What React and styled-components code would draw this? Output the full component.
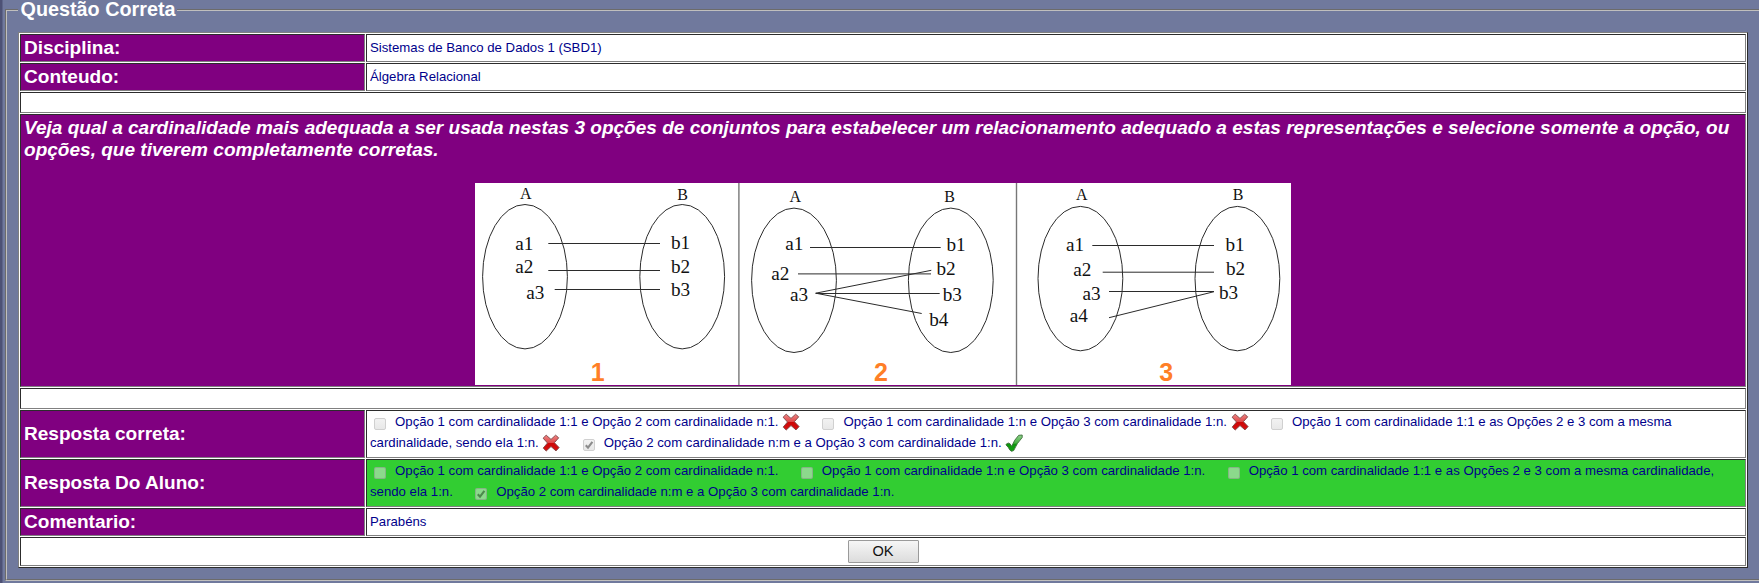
import React from "react";
import styled, { createGlobalStyle } from "styled-components";

const GlobalStyle = createGlobalStyle`
  html, body { margin: 0; padding: 0; overflow: hidden; }
  body {
    background: #70799d;
    font-family: "Liberation Sans", Arial, sans-serif;
  }
`;

const Page = styled.div`
  box-sizing: border-box;
  display: flow-root;
  height: 583px;
  width: 1759px;
  padding-left: 2px;
  border-left: 2px solid #4d5175;
  box-shadow: inset 1px 0 0 #5e658a;
  overflow: hidden;
`;

const Fieldset = styled.fieldset`
  box-sizing: border-box;
  width: 1757px;
  height: 582px;
  margin: -1px 0 0 1px;
  padding: 11px 11px 0;
  border: 2px groove #c0bfbe;
`;

const Legend = styled.legend`
  margin-left: 0;
  padding: 0 1.5px 2px 2.5px;
  color: #fff;
  font-size: 19.8px;
  font-weight: bold;
  line-height: 20px;
`;

const Table = styled.div`
  box-sizing: border-box;
  width: 1730px;
  display: grid;
  grid-template-columns: 345px 1fr;
  grid-template-rows: 28px 28px 21px 273px 21px 48px 48px 28px 29px;
  gap: 1px;
  padding: 1px;
  background: #fff;
  border: 1px solid;
  border-color: #808080 #2c2c2c #2c2c2c #808080;
`;

const Cell = styled.div`
  box-sizing: border-box;
  min-width: 0;
  border: 1px solid;
  border-color: #2c2c2c #808080 #808080 #2c2c2c;
  padding: 0 3px;
  background: #fff;
  color: #00008b;
  font-size: 13.2px;
`;

const LabelCell = styled(Cell)`
  display: flex;
  align-items: center;
  background: #800080;
  color: #fff;
  font-size: 19.06px;
  font-weight: bold;
`;

const ValueCell = styled(Cell)`
  display: flex;
  align-items: center;
  padding-bottom: 2px;
`;

const WideCell = styled(Cell)`
  grid-column: 1 / -1;
`;

const ActionCell = styled(WideCell)`
  display: flex;
  justify-content: center;
  align-items: flex-start;
  padding-top: 2px;
`;

const QuestionCell = styled(WideCell)`
  display: flex;
  flex-direction: column;
  justify-content: space-between;
  align-items: center;
  padding: 2px 3px 1px;
  background: #800080;
`;

const Question = styled.p`
  margin: 0;
  align-self: stretch;
  color: #fff;
  font-size: 19.05px;
  font-style: italic;
  font-weight: bold;
  line-height: 22px;
`;

const AnswersCell = styled(Cell)`
  line-height: 21px;
  background: ${(p) => (p.$right ? "#32cd32" : "#fff")};
`;

const Box = styled.span`
  box-sizing: border-box;
  display: inline-block;
  position: relative;
  width: 12px;
  height: 12px;
  margin: 0 5.4px 0 4px;
  vertical-align: -4px;
  border: 1px solid ${(p) => (p.$tint ? "rgba(130,150,130,.55)" : "#d0d0d0")};
  border-radius: 2px;
  background: ${(p) =>
    p.$tint ? "rgba(230,230,230,.5)" : "linear-gradient(#f2f2f2, #e8e8e8)"};
`;

const BoxTick = styled.svg`
  position: absolute;
  left: 0;
  top: 0;
  width: 10px;
  height: 10px;
`;

const MarkSvg = styled.svg`
  display: inline-block;
  width: 18px;
  height: 18px;
  vertical-align: -5px;
`;

const OkButton = styled.button`
  box-sizing: border-box;
  width: 71px;
  height: 23px;
  padding: 0;
  border: 1px solid #9a9a9a;
  border-radius: 1px;
  background: linear-gradient(#f6f6f6, #dcdcdc);
  color: #111;
  font: 14.6px/21px "Liberation Sans", Arial, sans-serif;
`;

const Diagram = styled.svg`
  display: block;
  flex: none;
  background: #fff;
`;

function CheckBox({ checked, tint }) {
  return (
    <Box $tint={tint}>
      {checked && (
        <BoxTick viewBox="0 0 10 10">
          <path
            d="M1.8 5.2 L4 7.6 L8.4 1.8"
            fill="none"
            stroke={tint ? "#4c8a4c" : "#8c8c8c"}
            strokeWidth="2.1"
          />
        </BoxTick>
      )}
    </Box>
  );
}

function Mark({ ok }) {
  return (
    <MarkSvg viewBox="0 0 18 18">
      <defs>
        <linearGradient id="wrongFill" x1="0" y1="0" x2="0" y2="1">
          <stop offset="0" stopColor="#ef8585" />
          <stop offset=".48" stopColor="#e04848" />
          <stop offset=".52" stopColor="#cc0808" />
          <stop offset="1" stopColor="#d81010" />
        </linearGradient>
        <linearGradient id="rightFill" x1="0" y1="0" x2="0" y2="1">
          <stop offset="0" stopColor="#8fd08c" />
          <stop offset=".5" stopColor="#46b040" />
          <stop offset=".56" stopColor="#0c950c" />
          <stop offset="1" stopColor="#12a412" />
        </linearGradient>
      </defs>
      {ok ? (
        <path
          d="M1 10.4 L3.2 9 L5 9.7 L6.7 12.3 Q9.4 5.5 13.7 1.3 L17.2 1 L17.2 3.5 Q11.8 9.2 8.7 16.5 L6.6 17.3 L5 16.2 Q3.6 13.2 1 10.9 Z"
          fill="url(#rightFill)"
          stroke="#3d6e3b"
          strokeWidth=".9"
          strokeLinejoin="round"
        />
      ) : (
        <path
          d="M4.2 1.2 L9 5.4 L13.6 1.2 L16.7 3.8 L12.4 8.7 L17.1 13.6 L14 16.9 L9 12.5 L4.2 17 L1.2 14.1 L5.5 9 L1.1 4.2 Z"
          fill="url(#wrongFill)"
          stroke="#7c4545"
          strokeWidth=".9"
          strokeLinejoin="round"
        />
      )}
    </MarkSvg>
  );
}

const SETS = [
  {
    n: ["1", 122.7, 198.3],
    ellipses: [[50, 93.7], [207.2, 93.7]],
    heads: [["A", 50.7, 16.2], ["B", 207.5, 16.7]],
    items: [
      ["a1", 40.2, 66.7], ["a2", 40.2, 90.3], ["a3", 51.3, 116],
      ["b1", 196, 65.7], ["b2", 196, 89.5], ["b3", 196, 112.5],
    ],
    lines: [
      [73.3, 60.5, 185, 60.5], [73.3, 87.5, 185, 87.5], [79.7, 106.5, 185, 106.5],
    ],
  },
  {
    n: ["2", 406, 197.6],
    ellipses: [[319, 97.3], [475.8, 97.3]],
    heads: [["A", 320.3, 18.7], ["B", 474.7, 18.7]],
    items: [
      ["a1", 310.3, 66.7], ["a2", 296.3, 97], ["a3", 315, 118],
      ["b1", 471.5, 67.7], ["b2", 461.5, 92], ["b3", 467.7, 117.7], ["b4", 454.2, 142.5],
    ],
    lines: [
      [335, 64.5, 465.7, 64.5], [323, 90.9, 456, 90.9], [340.7, 110.5, 464.7, 110.5],
      [340.7, 110.2, 456.3, 87.3], [340.7, 110.2, 446.7, 130.5],
    ],
  },
  {
    n: ["3", 691.3, 198],
    ellipses: [[605.4, 95.6], [762.4, 95.6]],
    heads: [["A", 606.7, 17], ["B", 763, 17.3]],
    items: [
      ["a1", 591, 68], ["a2", 598.3, 93.3], ["a3", 607.6, 116.8], ["a4", 594.7, 138.8],
      ["b1", 750.5, 68.3], ["b2", 751, 92], ["b3", 744, 115.7],
    ],
    lines: [
      [617.3, 62.5, 739, 62.5], [627.7, 89.2, 739, 89.2], [634, 108.5, 739, 108.5],
      [634, 134.7, 739, 108.7],
    ],
  },
];

function SetsDiagram() {
  return (
    <Diagram width="816" height="202" viewBox="0 0 816 202">
      <g stroke="#777" strokeWidth="1.4">
        <line x1="263.9" y1="0" x2="263.9" y2="202" />
        <line x1="541.5" y1="0" x2="541.5" y2="202" />
      </g>
      {SETS.map((s) => (
        <g key={s.n[0]}>
          <g fill="none" stroke="#2b2b2b" strokeWidth="1">
            {s.ellipses.map(([cx, cy]) => (
              <ellipse key={cx} cx={cx} cy={cy} rx="42.4" ry="72.2" />
            ))}
            {s.lines.map(([x1, y1, x2, y2], i) => (
              <line key={i} x1={x1} y1={y1} x2={x2} y2={y2} />
            ))}
          </g>
          <g fontFamily="Liberation Serif, Times New Roman, serif" fill="#111">
            {s.heads.map(([t, x, y]) => (
              <text key={t} x={x} y={y} fontSize="16" textAnchor="middle">{t}</text>
            ))}
            {s.items.map(([t, x, y]) => (
              <text key={t} x={x} y={y} fontSize="19.2">{t}</text>
            ))}
          </g>
          <text
            x={s.n[1]}
            y={s.n[2]}
            fontFamily="Liberation Sans, Arial, sans-serif"
            fontWeight="bold"
            fontSize="25"
            fill="#ff7f27"
            textAnchor="middle"
          >
            {s.n[0]}
          </text>
        </g>
      ))}
    </Diagram>
  );
}

const OPTIONS = [
  { text: "Opção 1 com cardinalidade 1:1 e Opção 2 com cardinalidade n:1." },
  { text: "Opção 1 com cardinalidade 1:n e Opção 3 com cardinalidade 1:n." },
  { text: "Opção 1 com cardinalidade 1:1 e as Opções 2 e 3 com a mesma cardinalidade, sendo ela 1:n." },
  { text: "Opção 2 com cardinalidade n:m e a Opção 3 com cardinalidade 1:n.", ok: true },
];

const GAP = "\u00a0\u00a0\u00a0\u00a0";

function Answers({ marks, right }) {
  return (
    <AnswersCell $right={right}>
      {OPTIONS.map((o, i) => (
        <React.Fragment key={i}>
          {i > 0 && GAP + " "}
          <CheckBox checked={o.ok} tint={right} />
          {"\u00a0" + o.text}
          {marks && "\u00a0"}
          {marks && <Mark ok={o.ok} />}
        </React.Fragment>
      ))}
    </AnswersCell>
  );
}

export default function App() {
  return (
    <>
      <GlobalStyle />
      <Page>
        <Fieldset>
          <Legend>Questão Correta</Legend>
          <Table>
            <LabelCell>Disciplina:</LabelCell>
            <ValueCell>Sistemas de Banco de Dados 1 (SBD1)</ValueCell>
            <LabelCell>Conteudo:</LabelCell>
            <ValueCell>Álgebra Relacional</ValueCell>
            <WideCell />
            <QuestionCell>
              <Question>
                Veja qual a cardinalidade mais adequada a ser usada nestas 3 opções de
                conjuntos para estabelecer um relacionamento adequado a estas
                representações e selecione somente a opção, ou opções, que tiverem
                completamente corretas.
              </Question>
              <SetsDiagram />
            </QuestionCell>
            <WideCell />
            <LabelCell>Resposta correta:</LabelCell>
            <Answers marks />
            <LabelCell>Resposta Do Aluno:</LabelCell>
            <Answers right />
            <LabelCell>Comentario:</LabelCell>
            <ValueCell>Parabéns</ValueCell>
            <ActionCell>
              <OkButton type="button">OK</OkButton>
            </ActionCell>
          </Table>
        </Fieldset>
      </Page>
    </>
  );
}
